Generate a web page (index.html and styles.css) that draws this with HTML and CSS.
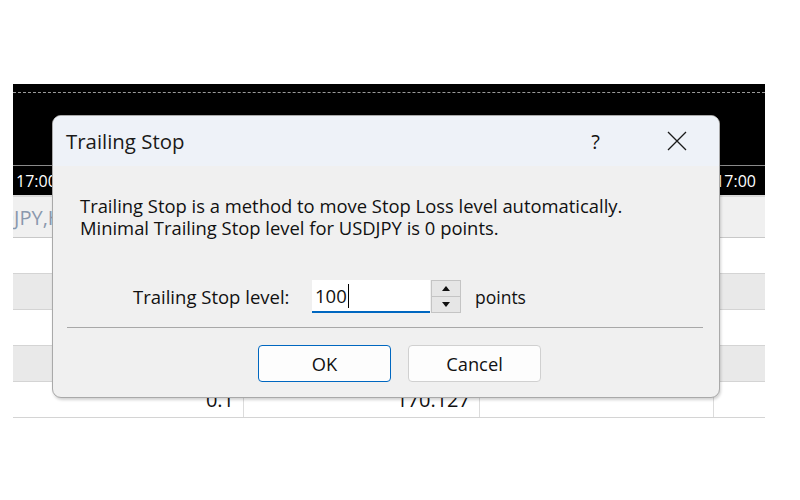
FILE: index.html
```html
<!DOCTYPE html>
<html>
<head>
<meta charset="utf-8">
<link rel="stylesheet" href="styles.css">
</head>
<body>
<div class="shot">
  <div class="chart">
    <div class="dash"></div>
    <div class="axis">
      <span class="t-left">17:00</span>
      <span class="t-right">17:00</span>
    </div>
  </div>
  <div class="tabs"><span class="tab-text">USDJPY,H1</span></div>
  <div class="row white"></div>
  <div class="row gray"></div>
  <div class="row white"></div>
  <div class="row gray"></div>
  <div class="row white data">
    <div class="cell c1">0.1</div>
    <div class="cell c2">170.127</div>
    <div class="cell c3"></div>
    <div class="cell c4"></div>
  </div>
</div>

<div class="dialog">
  <div class="titlebar">
    <span class="title">Trailing Stop</span>
    <span class="help">?</span>
    <svg class="close" width="20" height="20" viewBox="0 0 20 20"><path d="M1 1 L19 19 M19 1 L1 19" stroke="#1a1a1a" stroke-width="1.3" fill="none"/></svg>
  </div>
  <div class="body">
    <div class="desc">
      <div class="line">Trailing Stop is a method to move Stop Loss level automatically.</div>
      <div class="line">Minimal Trailing Stop level for USDJPY is 0 points.</div>
    </div>
    <div class="field">
      <span class="label">Trailing Stop level:</span>
      <div class="input"><span class="val">100</span><span class="caret"></span></div>
      <div class="spin">
        <div class="sbtn"><span class="tri up"></span></div>
        <div class="sbtn"><span class="tri down"></span></div>
      </div>
      <span class="unit">points</span>
    </div>
    <div class="sep"></div>
    <div class="buttons">
      <div class="btn primary">OK</div>
      <div class="btn">Cancel</div>
    </div>
  </div>
</div>
</body>
</html>
```

FILE: styles.css
```css
html, body {
  margin: 0;
  padding: 0;
  background: #ffffff;
  width: 800px;
  height: 500px;
  overflow: hidden;
  font-family: "Open Sans", "Noto Sans", sans-serif;
}

.shot {
  margin: 84px 0 0 13px;
  width: 752px;
}

.chart {
  background: #000;
  height: 111px;
  display: flex;
  flex-direction: column;
  justify-content: space-between;
}

.dash {
  margin-top: 8px;
  height: 0;
  border-top: 1px dashed #9a9a9a;
}

.axis {
  height: 29px;
  border-top: 1px solid #8a8a8a;
  display: flex;
  justify-content: space-between;
  align-items: center;
  color: #fff;
  font-size: 16px;
  padding: 0 9px 0 3px;
}

.tabs {
  height: 40px;
  background: #f0f0f0;
  border-top: 2px solid #d8d8d8;
  border-bottom: 1px solid #c8c8c8;
  overflow: hidden;
  display: flex;
  align-items: center;
}

.tab-text {
  margin-left: -39px;
  color: #8a98ad;
  font-size: 20px;
  white-space: nowrap;
}

.row {
  height: 35px;
  border-bottom: 1px solid #d4d4d4;
}
.row.gray { background: #e9e9e9; }
.row.white { background: #fff; }

.data {
  display: flex;
}
.cell {
  border-right: 1px solid #dcdcdc;
  text-align: right;
  font-size: 20px;
  color: #111;
  line-height: 35px;
  box-sizing: border-box;
}
.c1 { width: 231px; padding-right: 9px; }
.c2 { width: 236px; padding-right: 9px; }
.c3 { width: 234px; }
.c4 { flex: 1; border-right: none; }

.dialog {
  position: absolute;
  left: 52px;
  top: 115px;
  width: 668px;
  height: 283px;
  box-sizing: border-box;
  border: 1px solid #a9a9a9;
  border-radius: 9px;
  background: #f0f0f0;
  box-shadow: 1px 2px 3px rgba(0,0,0,0.18);
  overflow: hidden;
  color: #111;
}

.titlebar {
  height: 50px;
  background: #eef2f8;
  display: flex;
  align-items: center;
  padding-left: 13px;
}
.title {
  font-size: 20.4px;
  flex: 1;
  color: #1a1a1a;
}
.help {
  font-size: 20px;
  margin-right: 67px;
}
.close {
  margin-right: 32px;
}

.body {
  padding: 0 16px 0 14px;
}

.desc {
  margin: 29px 0 0 13px;
  font-size: 18.4px;
  line-height: 22px;
}

.field {
  display: flex;
  align-items: center;
  margin-top: 41px;
  padding-left: 66px;
  height: 33px;
}
.label {
  font-size: 18.5px;
  width: 179px;
}
.input {
  width: 118px;
  height: 33px;
  box-sizing: border-box;
  background: #fff;
  border-bottom: 2px solid #0067c0;
  display: flex;
  align-items: center;
  padding-left: 3px;
  font-size: 18.5px;
}
.caret {
  width: 1px;
  height: 24px;
  background: #000;
  margin-left: 1px;
}
.spin {
  width: 30px;
  height: 33px;
  display: flex;
  flex-direction: column;
  margin-left: 1px;
}
.sbtn {
  flex: 1;
  border: 1px solid #c4c4c4;
  background: #e6e6e6;
  display: flex;
  align-items: center;
  justify-content: center;
}
.sbtn + .sbtn { border-top: none; }
.tri {
  width: 0;
  height: 0;
  border-left: 4px solid transparent;
  border-right: 4px solid transparent;
}
.tri.up { border-bottom: 5px solid #111; }
.tri.down { border-top: 5px solid #111; }
.unit {
  font-size: 17.5px;
  margin-left: 14px;
}

.sep {
  margin-top: 14px;
  height: 0;
  border-top: 1px solid #a8a8a8;
}

.buttons {
  display: flex;
  gap: 17px;
  margin-top: 17px;
  padding-left: 191px;
}
.btn {
  width: 133px;
  height: 37px;
  box-sizing: border-box;
  border: 1px solid #d0d0d0;
  border-radius: 4px;
  background: #fdfdfd;
  display: flex;
  align-items: center;
  justify-content: center;
  font-size: 18.3px;
}
.btn.primary {
  border-color: #0067c0;
}
```
